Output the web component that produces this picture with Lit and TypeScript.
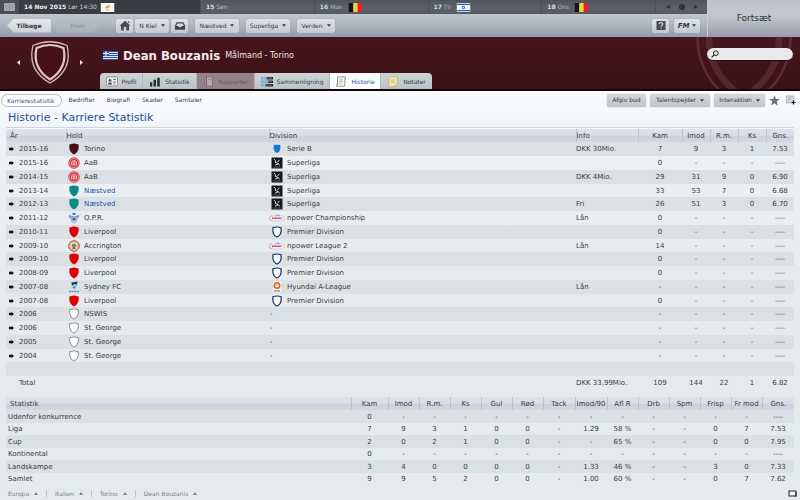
import { LitElement, html, svg, css, nothing, TemplateResult } from "lit";
import { customElement } from "lit/decorators.js";
import { classMap } from "lit/directives/class-map.js";

const SHIELD = "M1 1.5Q5.500 -.3 10 1.500V5.500Q9.500 9.500 5.500 11.500Q1.500 9.500 1 5.500Z";

const shield = (fill: string, stroke: string, width = 0.6) => html`
  <svg class="badge" viewBox="-.5 -.3 12 12.6" aria-hidden="true">
    <path d=${SHIELD} fill=${fill} stroke=${stroke} stroke-width=${width} />
  </svg>`;

const BADGES: Record<string, () => TemplateResult> = {
  torino: () => shield("#4a0f1c", "#3a0a14"),
  aab: () => html`<svg class="badge" viewBox="0 0 12 12" aria-hidden="true">
    <circle cx="6" cy="6" r="5.700" fill="#d8343c" />
    <circle cx="6" cy="6" r="4.600" fill="none" stroke="#f2c3c5" stroke-width=".6" />
    <path d="M3.500 8V4.800L6 3.300L8.500 4.800V8M5 8.500V5M7 8.500V5M6 9V4" fill="none" stroke="#fbe9e9" stroke-width=".7" />
  </svg>`,
  naestved: () => shield("#0b8a86", "#16807d"),
  qpr: () => html`<svg class="badge" viewBox="0 0 12 12" aria-hidden="true">
    <path d="M4.500 1.500L5.200 .6L6 1.300L6.800 .6L7.500 1.500L7.200 3H4.800Z" fill="#4b6fae" />
    <path d="M.5 3.500Q2.500 2.500 3.500 4H8.500Q9.500 2.500 11.500 3.500Q11 6 9.300 6.500Q9.500 10 6 11.700Q2.500 10 2.700 6.500Q1 6 .5 3.500Z" fill="#7f9cca" />
    <path d="M3 6H9M3 8H9M4 10H8M6 4V11.500" stroke="#e6edf7" stroke-width=".7" />
    <circle cx="6" cy="7" r="1.600" fill="#3e62a4" />
  </svg>`,
  liverpool: () => shield("#e00009", "#d0060c"),
  accrington: () => html`<svg class="badge" viewBox="0 0 12 12" aria-hidden="true">
    <circle cx="6" cy="6" r="5.300" fill="#e8dfcf" stroke="#b6423c" stroke-width="1" />
    <circle cx="6" cy="6" r="3.900" fill="none" stroke="#b89078" stroke-width=".5" />
    <path d="M3.500 5.500Q6 1.800 8.500 5.500L7.300 6L7.600 9H4.400L4.700 6Z" fill="#5d5a45" />
    <path d="M6 4V8.500" stroke="#d9b95a" stroke-width=".8" />
  </svg>`,
  sydney: () => html`<svg class="badge" viewBox="0 0 12 12" aria-hidden="true">
    <path d="M3.500 1.500L9.500 .5L8.800 5Q8 8 6 8.500Q4 7.500 3.800 5Z" fill="#9ccbe0" />
    <path d="M3.500 1.500L9.500 .5L9 3.500L6.500 3L4 4.500Z" fill="#1c3d63" />
    <path d="M5 6L8 5L6.500 8Z" fill="#2a8ab5" />
    <path d="M1 10.500H11" stroke="#4f9cc0" stroke-width="1.300" stroke-dasharray="1.200 .3" />
  </svg>`,
  plain: () => shield("#ffffff", "#555b60", 0.7),
  serieb: () => html`<svg class="badge" viewBox="0 0 12 12" aria-hidden="true">
    <path d="M2.200 1.800Q6 .8 9.800 1.800V6Q9.200 9.300 6 10.600Q2.800 9.300 2.200 6Z" fill="#1577d2" stroke="#fff" stroke-width=".6" />
  </svg>`,
  superliga: () => html`<svg class="badge" viewBox="0 0 12 12" aria-hidden="true">
    <path d="M.5 .5H11.500V11.500H.5Z" fill="#15171a" />
    <path d="M3 2L4.600 3.800L4.200 5.200L7.300 6.800M8.500 2.800L6.200 5.400M7.300 6.800L4.200 8.200M7.300 6.800L8.800 8.200" fill="none" stroke="#f1f1f1" stroke-width=".9" />
    <path d="M2.500 10H9.500" stroke="#8d8f92" stroke-width=".8" stroke-dasharray=".8 .3" />
  </svg>`,
  npower: () => html`<svg class="badge wide" viewBox="0 0 16 10" aria-hidden="true">
    <rect x=".5" y="2.800" width="15" height="5" rx="2.500" fill="#f4eef4" stroke="#b9bfdd" stroke-width=".5" />
    <path d="M3 2.800H3A2.400 2.400 0 0 0 3 7.700" fill="none" stroke="#e3899b" stroke-width=".6" />
    <path d="M3 5.300H9" stroke="#dc2f55" stroke-width="1.600" stroke-dasharray="1.200 .3" />
    <path d="M9 5.300H12.500" stroke="#7a4c96" stroke-width="1.400" stroke-dasharray="1 .3" />
    <path d="M6.500 3L9 1.800L11 3" fill="none" stroke="#7b6aa8" stroke-width=".7" />
  </svg>`,
  premier: () => html`<svg class="badge" viewBox="0 0 12 12" aria-hidden="true">
    <path d="M1.900 1.700Q6 .3 10.100 1.700V5.500Q9.600 9.300 6 11Q2.400 9.300 1.900 5.500Z" fill="#f6f8fb" stroke="#1b2f66" stroke-width="1.200" />
  </svg>`,
  aleague: () => html`<svg class="badge" viewBox="0 0 12 12" aria-hidden="true">
    <path d="M2 .3H10V11.700H2Z" fill="#f8f3ee" />
    <circle cx="6" cy="4.500" r="2.700" fill="none" stroke="#d9622b" stroke-width="1.600" />
    <path d="M6 2.500V5" stroke="#e8b23c" stroke-width="1" />
    <path d="M3 10H9" stroke="#4c3a34" stroke-width="1" stroke-dasharray="1 .3" />
  </svg>`,
};

interface Season {
  year: string;
  team: string;
  badge: string;
  own?: boolean;
  league: string;
  leagueBadge?: string;
  info?: string;
  stats: string[];
}

const row = (
  year: string, team: string, badge: string, league: string, leagueBadge: string,
  info: string, stats: string, own = false,
): Season => ({ year, team, badge, league, leagueBadge, info, stats: stats.split(" "), own });

const NONE = "- - - ----";

const SEASONS: Season[] = [
  row("2015-16", "Torino", "torino", "Serie B", "serieb", "DKK 30Mio.", "7 9 3 1 7.53"),
  row("2015-16", "AaB", "aab", "Superliga", "superliga", "", `0 ${NONE}`),
  row("2014-15", "AaB", "aab", "Superliga", "superliga", "DKK 4Mio.", "29 31 9 0 6.90"),
  row("2013-14", "Næstved", "naestved", "Superliga", "superliga", "", "33 53 7 0 6.68", true),
  row("2012-13", "Næstved", "naestved", "Superliga", "superliga", "Fri", "26 51 3 0 6.70", true),
  row("2011-12", "Q.P.R.", "qpr", "npower Championship", "npower", "Lån", `0 ${NONE}`),
  row("2010-11", "Liverpool", "liverpool", "Premier Division", "premier", "", `0 ${NONE}`),
  row("2009-10", "Accrington", "accrington", "npower League 2", "npower", "Lån", `14 ${NONE}`),
  row("2009-10", "Liverpool", "liverpool", "Premier Division", "premier", "", `0 ${NONE}`),
  row("2008-09", "Liverpool", "liverpool", "Premier Division", "premier", "", `0 ${NONE}`),
  row("2007-08", "Sydney FC", "sydney", "Hyundai A-League", "aleague", "Lån", `- ${NONE}`),
  row("2007-08", "Liverpool", "liverpool", "Premier Division", "premier", "", `0 ${NONE}`),
  row("2006", "NSWIS", "plain", "-", "", "", `- ${NONE}`),
  row("2006", "St. George", "plain", "-", "", "", `- ${NONE}`),
  row("2005", "St. George", "plain", "-", "", "", `- ${NONE}`),
  row("2004", "St. George", "plain", "-", "", "", `- ${NONE}`),
];

const STAT_HEADS = ["Kam", "Imod", "R.m.", "Ks", "Gul", "Rød", "Tack", "Imod/90", "Afl R", "Drb", "Spm", "Frisp", "Fr mod", "Gns."];
const STATS: [string, string[]][] = [
  ["Udenfor konkurrence", ["0", "-", "-", "-", "-", "-", "-", "-", "-", "-", "-", "-", "-", "----"]],
  ["Liga", ["7", "9", "3", "1", "0", "0", "-", "1.29", "58 %", "-", "-", "0", "7", "7.53"]],
  ["Cup", ["2", "0", "2", "1", "0", "0", "-", "-", "65 %", "-", "-", "0", "0", "7.95"]],
  ["Kontinental", ["0", "-", "-", "-", "-", "-", "-", "-", "-", "-", "-", "-", "-", "----"]],
  ["Landskampe", ["3", "4", "0", "0", "0", "0", "-", "1.33", "46 %", "-", "-", "3", "0", "7.33"]],
  ["Samlet", ["9", "9", "5", "2", "0", "0", "-", "1.00", "60 %", "-", "-", "0", "7", "7.62"]],
];

const belgium = html`<svg class="flag" viewBox="0 0 15 10" role="img" aria-label="Belgien">
  <path d="M0 0H5V10H0Z" fill="#15130f" /><path d="M5 0H10V10H5Z" fill="#f6d32b" /><path d="M10 0H15V10H10Z" fill="#e0202f" />
</svg>`;
const israel = html`<svg class="flag" viewBox="0 0 15 10" role="img" aria-label="Israel">
  <path d="M0 0H15V10H0Z" fill="#f3f6fb" /><path d="M0 1.600H15M0 8.400H15" stroke="#2d5fc0" stroke-width="1.300" />
  <path d="M7.500 3L9.200 6H5.800ZM7.500 7L5.800 4H9.200Z" fill="none" stroke="#2d5fc0" stroke-width=".6" />
</svg>`;
const cyprus = html`<svg class="flag" viewBox="0 0 15 10" role="img" aria-label="Cypern">
  <path d="M0 0H15V10H0Z" fill="#fbfbf8" /><path d="M5 4.500Q7 2.500 10.500 2.500L9.500 5Q7 6.500 5.500 5.500Z" fill="#e8953a" />
  <path d="M5.500 7Q7.500 8.500 9.500 7" fill="none" stroke="#7c9a55" stroke-width=".7" />
</svg>`;
const greece = html`<svg class="flag" viewBox="0 0 15 9" role="img" aria-label="Grækenland">
  <path d="M0 0H15V9H0Z" fill="#2c4fae" />
  <path d="M0 1.500H15M0 3.500H15M0 5.500H15M0 7.500H15" stroke="#e4e9f6" stroke-width="1" />
  <path d="M0 0H6V5H0Z" fill="#2c4fae" /><path d="M3 0V5M0 2.500H6" stroke="#fff" stroke-width="1" />
</svg>`;

const caret = html`<svg class="caret" viewBox="0 0 5 3" aria-hidden="true"><path d="M0 0H5L2.500 3Z" fill="currentColor" /></svg>`;

const TAB_ICONS = {
  profil: svg`<rect x=".5" y="1" width="11" height="9" rx="1" fill="#eceeef" stroke="#7f858a" stroke-width=".8"/>
    <path d="M2.500 5Q2.500 3 4 3T5.500 5V5.500H2.500ZM2 8.500Q2.200 6.200 4 6.200T6 8.500Z" fill="#44484c"/>
    <path d="M7.300 3.500H9.800M7.300 6H9.800M7.300 8H9" stroke="#555a5f" stroke-width=".9"/>`,
  statistik: svg`<path d="M1 6.500Q2 5.500 3.300 6.500V10.500H1ZM4.500 4Q5.700 3 7 4V10.500H4.500ZM8.200 2Q9.500 1 10.800 2V10.500H8.200Z" fill="#2a2e32"/>`,
  rapporter: svg`<path d="M2 1H9.500V10H2Z" fill="#b5a9ae" stroke="#75686d" stroke-width=".7"/><path d="M3.500 1V10" stroke="#75686d" stroke-width="1"/><path d="M5 3.500H8.500" stroke="#85787d" stroke-width=".8"/>`,
  sammenligning: svg`<path d="M0 1H5.500V3.500H0ZM0 4.500H7V7H0ZM0 8H4.500V10.500H0Z" fill="#6ea6cf"/><path d="M5.500 1H12V3.500H5.500ZM7 4.500H12V7H7ZM4.500 8H12V10.500H4.500Z" fill="#22272c"/>
    <path d="M1 2.200H11M1 5.700H11M1 9.200H11" stroke="#dbe6ee" stroke-width=".4"/>`,
  historie: svg`<path d="M2.500 1H10.500V3H9.800V10.200H1.500V8.700H2.500Z" fill="#f6f4ec" stroke="#8a877a" stroke-width=".8"/><path d="M4.200 3.700H8M4.200 5.500H8M4.200 7.300H6.500" stroke="#a5a294" stroke-width=".7"/>`,
  notater: svg`<path d="M2 1Q6 .5 10.500 1V8L8.500 10.500H1.700Z" fill="#f3e3b3" stroke="#c5ad6c" stroke-width=".7"/><path d="M3.800 4H8.500M3.800 6H8" stroke="#c2aa6e" stroke-width=".7"/><path d="M8.300 10.300V8H10.500" fill="#fff4cf" stroke="#c5ad6c" stroke-width=".5"/>`,
};

const TABS: [keyof typeof TAB_ICONS, string][] = [
  ["profil", "Profil"], ["statistik", "Statistik"], ["rapporter", "Rapporter"],
  ["sammenligning", "Sammenligning"], ["historie", "Historie"], ["notater", "Notater"],
];

@customElement("app-root")
export class AppRoot extends LitElement {
  static styles = css`
    :host {
      display: flex;
      flex-direction: column;
      min-height: 100vh;
      font: 7px/12px "DejaVu Sans", sans-serif;
      color: #383e42;
      background: linear-gradient(#f9fbfd 90px, #eef1f4 150px, #e6eaed 280px, #e5eaec);
    }
    * { box-sizing: border-box; }
    button, input { font: inherit; color: inherit; margin: 0; padding: 0; border: 0; background: none; }
    a { color: inherit; text-decoration: none; }
    svg { display: block; flex: none; }

    .top { display: flex; height: 37px; }
    .bars { flex: 1; display: flex; flex-direction: column; min-width: 0; font-size: 6px; }
    .continue {
      width: 93px; font-size: 9px; color: #2c3034; padding-bottom: 2px;
      border-left: 1px solid #c9ced5;
      background: linear-gradient(#bcc1ca, #c3c8d0 40%, #989da8);
    }
    .calendar { display: flex; height: 14px; color: #b3b8bd; background: linear-gradient(#50555b, #5b6067 60%, #565b62); }
    .day { flex: 1; display: flex; align-items: center; gap: 5px; padding-left: 5px; border-left: 1px solid #4b4f55; }
    .day b { color: #dcdfe2; }
    .today { flex: none; gap: 3px; width: 181px; color: #d0d3d6; background: #393d42; border: 0; }
    .today b { color: #f0f1f2; }
    .cal { width: 19px; display: grid; place-items: center; background: #4a4f55; }
    .cal svg { width: 11px; height: 8px; }
    .flag { width: 15px; height: 9px; }
    .pager { width: 52px; display: flex; align-items: center; justify-content: center; gap: 9px; color: #2f3337; border-left: 1px solid #4b4f55; }
    .pager svg { width: 4px; height: 4px; }
    .pager .dot { width: 6px; height: 6px; }

    .nav { flex: 1; display: flex; align-items: center; gap: 2px; padding: 0 7px; background: linear-gradient(#bfc5ce, #b3b9c3 40%, #959ba6); }
    .btn {
      height: 14px; display: flex; align-items: center; justify-content: center; gap: 4px; padding: 0 4px;
      border-radius: 2px; color: #33383c; font-size: 6px; white-space: nowrap;
      background: linear-gradient(#dde0e4, #c6cad0); box-shadow: 0 0 1px #7d838c;
    }
    .nav .gap { margin-left: 5px; }
    .nav .push { margin-left: auto; }
    .back, .fwd { width: 44px; box-shadow: none; }
    .back { clip-path: polygon(0 50%, 16% 0, 100% 0, 100% 100%, 16% 100%); background: linear-gradient(#e6e8eb, #cdd1d6); }
    .fwd { margin: 0 14px 0 3px; color: #888e98; clip-path: polygon(0 0, 84% 0, 100% 50%, 84% 100%, 0 100%); background: linear-gradient(#b9bfc8, #aab0ba); }
    .square { width: 17px; padding: 0; }
    .square svg { width: 12px; height: 11px; }
    .w34 { width: 34px; } .w38 { width: 38px; } .w44 { width: 44px; }
    .fm { width: 26px; margin-left: 3px; padding: 0; gap: 3px; font-size: 7px; font-weight: bold; font-style: italic; }
    .caret { width: 4px; height: 3px; }

    .hero {
      position: relative; overflow: hidden; display: flex; height: 54px; color: #f0e4e6;
      background: linear-gradient(#47151e, #3c1118); border-bottom: 2px solid #12060a;
    }
    .watermark { position: absolute; right: 4px; top: -38px; width: 104px; height: 112px; }
    .crest { width: 100px; display: flex; align-items: center; justify-content: center; gap: 10px; padding-bottom: 2px; }
    .crest svg { width: 40px; height: 44px; }
    .crest .arrow { width: 3px; height: 5px; }
    .main { flex: 1; display: flex; flex-direction: column; justify-content: space-between; }
    .name { display: flex; align-items: center; gap: 5px; height: 36px; padding-left: 3px; }
    h1 { margin: 0; font: bold 13px "DejaVu Sans Condensed", "DejaVu Sans", sans-serif; color: #f4eaec; }
    .role { font-size: 8px; padding-top: 1px; }
    .tabs { display: flex; height: 17px; margin-bottom: -1px; font-size: 6px; }
    .tab {
      display: flex; align-items: center; justify-content: center; gap: 4px; width: 54px;
      color: #31373b; background: linear-gradient(#cdd2d5, #bcc3c8); border-right: 1px solid #b0b7bc;
    }
    .tab svg { width: 12px; height: 11px; }
    .tab:first-child { width: 43px; border-radius: 4px 0 0 0; }
    .tab:last-child { width: 51px; border: 0; border-radius: 0 4px 0 0; }
    .tab.rapporter { width: 58px; color: #66565c; background: #93838a; }
    .tab.sammenligning { width: 75px; }
    .tab.historie { width: 51px; color: #2b5a91; background: #f9fbfd; }
    .search {
      position: relative; align-self: flex-start; margin: 11px 7px 0 0; width: 86px; height: 13px;
      display: flex; align-items: center; padding-left: 4px; border-radius: 7px; background: #e9e9ea; border-bottom: 1px solid #220a0e;
    }
    .search svg { width: 8px; height: 8px; }
    .search input { flex: 1; min-width: 0; color: #222; outline: 0; }

    .toolbar { display: flex; align-items: center; gap: 4px; height: 18px; padding: 0 4px 0 1px; font-size: 6px; }
    .views { flex: 1; display: flex; gap: 12px; }
    .views .on { padding: 0 6px 0 5px; margin-right: -5px; line-height: 11px; border: 1px solid #b4bcc3; border-radius: 7px; color: #2b5a91; background: #fff; height: 13px; }
    .toolbar .btn { height: 13px; background: linear-gradient(#d3d8dc, #bfc6cb); box-shadow: 0 0 1px #858d93; }
    .w39 { width: 39px; } .w60 { width: 60px; } .w51 { width: 51px; }
    .star { width: 11px; height: 11px; }
    .note { width: 10px; height: 10px; margin-left: 2px; }

    h2 { margin: 0 6px; padding-left: 2px; font: 11px/18px "DejaVu Sans", sans-serif; color: #1d5296; border-bottom: 1px solid #cfd4da; }
    .content { padding: 1px 6px 0; }
    table { width: 100%; border-collapse: collapse; table-layout: fixed; }
    th, td { padding: 0; font-weight: normal; text-align: center; line-height: 12px; white-space: nowrap; }
    thead tr { height: 13px; background: linear-gradient(#dfe2ea, #d8dbe6 50%, #ccd1dd 55%, #d3d7e0); }
    thead th + th { border-left: 1px solid #bec3cd; }
    .l { text-align: left; }
    .career tbody tr { height: 14px; }
    .career tbody tr:nth-child(4n) { height: 13px; }
    tbody tr:nth-child(odd) { background: #dbe0e4; }
    .career .total { background: none; }
    .career thead .l:first-child { padding-left: 4px; }
    .cell { display: flex; align-items: center; height: 12px; }
    .team { gap: 4px; padding-left: 2px; }
    .team .badge { width: 12px; height: 12px; }
    .team .wide { width: 16px; margin: 0 -2px; }
    .team.none { padding-left: 1px; }
    .year { gap: 5px; padding-left: 3px; }
    .year svg { width: 5px; height: 4px; }
    .own { color: #1e55a6; }
    .c-year { width: 60px; } .c-team { width: 203px; } .c-info { width: 62px; } .c-kam { width: 44px; } .c-n { width: 28px; }
    .total .first { padding-left: 13px; }
    .stats { margin-top: 7px; }
    .stats thead .l { padding-left: 4px; }
    .stats tbody .l { padding-left: 2px; }
    .stats tbody tr { height: 12px; }
    .stats tbody tr:nth-child(odd) { height: 13px; }
    .s-kam { width: 37px; } .s-n { width: 31px; } .s-w { width: 32px; }

    .foot { display: flex; align-items: center; margin-top: auto; height: 14px; padding: 0 3px 0 8px; font-size: 6px; color: #7b8186; }
    .crumb { display: flex; align-items: center; gap: 5px; padding-right: 8px; margin-right: 8px; border-right: 1px solid #bcc2c6; line-height: 7px; }
    .crumb:nth-last-of-type(1) { border: 0; }
    .crumb svg { width: 4px; height: 3px; }
    .screen { width: 9px; height: 7px; margin-left: auto; }
  `;

  private menu(label: string, cls: string) {
    return html`<button class="btn ${cls}" aria-haspopup="menu">${label}${caret}</button>`;
  }

  private renderTop() {
    return html`<div class="top">
      <div class="bars">
        <div class="calendar">
          <button class="cal" aria-label="Kalender"><svg viewBox="0 0 11 8"><rect width="11" height="8" rx="1" fill="#a4a9ad" /><path d="M5.500 1V7" stroke="#83888d" stroke-width=".7" /><path d="M1.500 2.500H4.500M1.500 4H4.500M1.500 5.500H4.500M6.500 2.500H9.500M6.500 4H9.500M6.500 5.500H9.500" stroke="#8f9498" stroke-width=".5" /></svg></button>
          <div class="day today"><span><b>14 Nov 2015</b> Lør 14:30</span>${cyprus}</div>
          <div class="day"><span><b>15</b> Søn</span></div>
          <div class="day"><span><b>16</b> Man</span>${belgium}</div>
          <div class="day"><span><b>17</b> Tir</span>${israel}</div>
          <div class="day"><span><b>18</b> Ons</span>${belgium}</div>
          <div class="pager">
            <svg viewBox="0 0 4 4"><path d="M4 0V4L0 2Z" fill="currentColor" /></svg>
            <svg class="dot" viewBox="0 0 6 6"><circle cx="3" cy="3" r="3" fill="currentColor" /></svg>
            <svg viewBox="0 0 4 4"><path d="M0 0V4L4 2Z" fill="currentColor" /></svg>
          </div>
        </div>
        <nav class="nav">
          <button class="btn back"><b>Tilbage</b></button>
          <button class="btn fwd" disabled>Frem</button>
          <button class="btn square" aria-label="Hjem"><svg viewBox="0 0 12 11"><path d="M6 .8L11.500 5.800H10V10.500H7.200V7H4.800V10.500H2V5.800H.5ZM8.800 1.200H10.200V3.500L8.800 2.300Z" fill="#484d52" /></svg></button>
          ${this.menu("N Kiel", "w34")}
          <button class="btn square" aria-label="Stadion"><svg viewBox="0 0 12 11"><path d="M1.500 6L3 2.800H9L10.500 6V9H1.500Z" fill="none" stroke="#3f4449" stroke-width="1.200" /><path d="M1 6H4Q4.500 7.300 6 7.300T8 6H11V9.500H1Z" fill="#3f4449" /></svg></button>
          ${this.menu("Næstved", "w44 gap")}
          ${this.menu("Superliga", "w44 gap")}
          ${this.menu("Verden", "w38 gap")}
          <button class="btn square push" aria-label="Hjælp"><svg viewBox="0 0 12 11"><rect x="1.500" y="1" width="9" height="9" fill="#484c50" /><path d="M4.200 4Q4.300 2.500 6 2.500T7.800 3.900Q7.800 4.800 6.800 5.200Q6.100 5.500 6.100 6.500M6.100 7.400V8.600" fill="none" stroke="#e4e6e8" stroke-width="1.100" /></svg></button>
          <button class="btn fm" aria-haspopup="menu">FM${caret}</button>
        </nav>
      </div>
      <button class="continue">Fortsæt</button>
    </div>`;
  }

  private renderHero() {
    const outer = "M3 5.500Q20 -2 37 5.500Q43 30 20 43Q-3 30 3 5.500Z";
    return html`<header class="hero">
      <svg class="watermark" viewBox="0 0 40 44" aria-hidden="true">
        <path d=${outer} fill="none" stroke="#5b2c34" stroke-width="1" />
        <path d="M7 8.500Q20 3 33 8.500Q37 28 20 38.500Q3 28 7 8.500Z" fill="none" stroke="#57272f" stroke-width="2.500" />
      </svg>
      <div class="crest">
        <svg class="arrow" viewBox="0 0 3 5"><path d="M3 0V5L0 2.500Z" fill="#f0e4e6" /></svg>
        <svg viewBox="0 0 40 44" role="img" aria-label="Torino">
          <path d=${outer} fill="#3c0e16" stroke="#d9b4ba" stroke-width="1.300" />
          <path d="M6.500 8Q20 2 33.500 8Q38 28 20 39.500Q2 28 6.500 8Z" fill="#47101a" stroke="#e6c6cb" stroke-width="2.200" />
        </svg>
        <svg class="arrow" viewBox="0 0 3 5"><path d="M0 0V5L3 2.500Z" fill="#f0e4e6" /></svg>
      </div>
      <div class="main">
        <div class="name">${greece}<h1>Dean Bouzanis</h1><span class="role">Målmand - Torino</span></div>
        <nav class="tabs">
          ${TABS.map(([id, label]) => html`<button class=${classMap({ tab: true, [id]: true })} ?disabled=${id === "rapporter"}>
            <svg viewBox="0 0 12 11" aria-hidden="true">${TAB_ICONS[id]}</svg>${label}</button>`)}
        </nav>
      </div>
      <label class="search">
        <svg viewBox="0 0 8 8" aria-hidden="true"><circle cx="4.800" cy="3.200" r="2.400" fill="none" stroke="#2b2b2b" stroke-width="1" /><path d="M3 5L.6 7.400" stroke="#2b2b2b" stroke-width="1.200" /></svg>
        <input type="text" aria-label="Søg" />
      </label>
    </header>`;
  }

  private renderCareer() {
    return html`<table class="career">
      <colgroup><col class="c-year" /><col class="c-team" /><col /><col class="c-info" /><col class="c-kam" /><col class="c-n" /><col class="c-n" /><col class="c-n" /><col class="c-n" /></colgroup>
      <thead><tr>
        <th class="l">År</th><th class="l">Hold</th><th class="l">Division</th><th class="l">Info</th>
        <th>Kam</th><th>Imod</th><th>R.m.</th><th>Ks</th><th>Gns.</th>
      </tr></thead>
      <tbody>
        ${SEASONS.map((s) => html`<tr>
          <td><div class="cell year"><svg viewBox="0 0 5 4" aria-hidden="true"><path d="M0 .7H2.500V0L5 2L2.500 4V3.300H0Z" fill="#111" /></svg>${s.year}</div></td>
          <td><div class="cell team">${BADGES[s.badge]()}<span class=${classMap({ own: !!s.own })}>${s.team}</span></div></td>
          <td><div class=${classMap({ cell: true, team: true, none: !s.leagueBadge })}>${s.leagueBadge ? BADGES[s.leagueBadge]() : nothing}<span>${s.league}</span></div></td>
          <td class="l">${s.info}</td>
          ${s.stats.map((v) => html`<td>${v}</td>`)}
        </tr>`)}
        <tr><td colspan="9"></td></tr>
        <tr class="total"><td class="l first">Total</td><td></td><td></td><td class="l">DKK 33,99Mio.</td><td>109</td><td>144</td><td>22</td><td>1</td><td>6.82</td></tr>
      </tbody>
    </table>`;
  }

  private renderStats() {
    return html`<table class="stats">
      <colgroup><col /><col class="s-kam" />${STAT_HEADS.slice(1).map((h) => html`<col class=${["Tack", "Imod/90", "Gns."].includes(h) ? "s-w" : "s-n"} />`)}</colgroup>
      <thead><tr><th class="l">Statistik</th>${STAT_HEADS.map((h) => html`<th>${h}</th>`)}</tr></thead>
      <tbody>${STATS.map(([name, values]) => html`<tr><th class="l" scope="row">${name}</th>${values.map((v) => html`<td>${v}</td>`)}</tr>`)}</tbody>
    </table>`;
  }

  render() {
    return html`
      ${this.renderTop()}
      ${this.renderHero()}
      <div class="toolbar">
        <nav class="views">
          <a class="on" href="#karriere">Karrierestatistik</a><a href="#bedrifter">Bedrifter</a><a href="#biografi">Biografi</a><a href="#skader">Skader</a><a href="#samtaler">Samtaler</a>
        </nav>
        <button class="btn w39">Afgiv bud</button>
        ${this.menu("Talentspejder", "w60")}
        ${this.menu("Interaktion", "w51")}
        <button aria-label="Favorit"><svg class="star" viewBox="0 0 11 11"><path d="M5.500 .3L6.900 3.900L10.700 4.100L7.700 6.500L8.800 10.400L5.500 8.200L2.200 10.400L3.300 6.500L.3 4.100L4.100 3.900Z" fill="#6a7076" /></svg></button>
        <button aria-label="Tilføj note"><svg class="note" viewBox="0 0 10 10"><rect x=".5" y="1" width="7.500" height="7" fill="#d5d9dc" stroke="#a3a9ae" stroke-width=".7" /><path d="M2 3H6.500M2 5H5" stroke="#a3a9ae" stroke-width=".6" /><path d="M7.500 5.500V9.500M5.500 7.500H9.500" stroke="#111" stroke-width="1.200" /></svg></button>
      </div>
      <h2>Historie - Karriere Statistik</h2>
      <main class="content">${this.renderCareer()}${this.renderStats()}</main>
      <footer class="foot">
        ${["Europa", "Italien", "Torino", "Dean Bouzanis"].map((c) => html`<a class="crumb" href="#top">${c}<svg viewBox="0 0 4 3" aria-hidden="true"><path d="M0 3H4L2 0Z" fill="#7b8186" /></svg></a>`)}
        <svg class="screen" viewBox="0 0 9 7" aria-hidden="true"><rect x="1" y="1" width="7" height="5" fill="#f4f6f7" stroke="#222" stroke-width="1" /><path d="M8 2V6.500" fill="none" stroke="#222" stroke-width="1" /></svg>
      </footer>
    `;
  }
}
